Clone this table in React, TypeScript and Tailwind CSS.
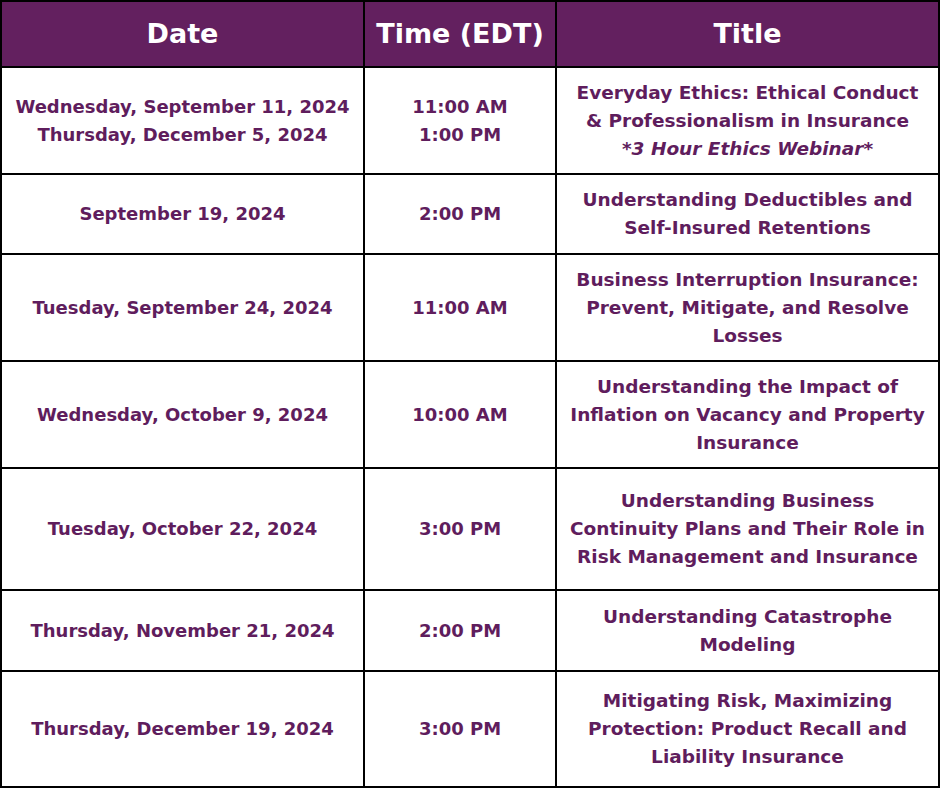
import React from "react"

const rows = [
  {
    h: "h-[105px]",
    date: ["Wednesday, September 11, 2024", "Thursday, December 5, 2024"],
    time: ["11:00 AM", "1:00 PM"],
    title: ["Everyday Ethics: Ethical Conduct", "& Professionalism in Insurance"],
    note: "*3 Hour Ethics Webinar*",
  },
  {
    h: "h-[78px]",
    date: ["September 19, 2024"],
    time: ["2:00 PM"],
    title: ["Understanding Deductibles and", "Self-Insured Retentions"],
  },
  {
    h: "h-[105px]",
    date: ["Tuesday, September 24, 2024"],
    time: ["11:00 AM"],
    title: ["Business Interruption Insurance:", "Prevent, Mitigate, and Resolve", "Losses"],
  },
  {
    h: "h-[105px]",
    date: ["Wednesday, October 9, 2024"],
    time: ["10:00 AM"],
    title: ["Understanding the Impact of", "Inflation on Vacancy and Property", "Insurance"],
  },
  {
    h: "h-[120px]",
    date: ["Tuesday, October 22, 2024"],
    time: ["3:00 PM"],
    title: ["Understanding Business", "Continuity Plans and Their Role in", "Risk Management and Insurance"],
  },
  {
    h: "h-[79px]",
    date: ["Thursday, November 21, 2024"],
    time: ["2:00 PM"],
    title: ["Understanding Catastrophe", "Modeling"],
  },
  {
    h: "h-[114px]",
    date: ["Thursday, December 19, 2024"],
    time: ["3:00 PM"],
    title: ["Mitigating Risk, Maximizing", "Protection: Product Recall and", "Liability Insurance"],
  },
]

const Cell = ({ lines, h, note, size = "text-[18px]" }: { lines: string[]; h: string; note?: string; size?: string }) => (
  <div className={`${h} ${size} bg-white flex flex-col items-center justify-center text-center text-[#5f1d5d] font-bold leading-[28px] whitespace-nowrap`}>
    {lines.map(l => (
      <div key={l}>{l}</div>
    ))}
    {note && <div className="italic">{note}</div>}
  </div>
)

const App = () => {
  return (
    <div
      className="w-[940px] h-[788px] bg-black p-[2px] grid grid-cols-[361px_190px_381px] gap-[2px] content-start"
      style={{ fontFamily: '"DejaVu Sans", sans-serif' }}
    >
      {["Date", "Time (EDT)", "Title"].map(t => (
        <div key={t} className="h-[64px] bg-[#63205f] flex items-center justify-center text-white font-bold text-[27px]">
          {t}
        </div>
      ))}
      {rows.map(r => (
        <React.Fragment key={r.date[0]}>
          <Cell lines={r.date} h={r.h} />
          <Cell lines={r.time} h={r.h} />
          <Cell lines={r.title} h={r.h} note={r.note} size="text-[18.5px]" />
        </React.Fragment>
      ))}
    </div>
  )
}

export default App
